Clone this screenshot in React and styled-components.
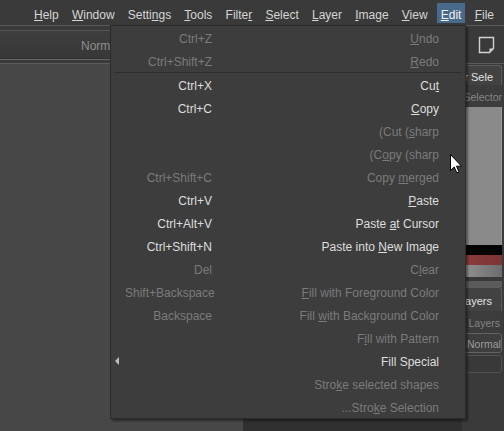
import React from "react";
import styled, { createGlobalStyle } from "styled-components";

const GlobalStyle = createGlobalStyle`
  html, body { margin: 0; padding: 0; background: #3a3a3a; }
  body { font-family: "Liberation Sans", Arial, sans-serif; font-size: 12px; }
`;

const menus = ["&Help", "&Window", "Setti&ngs", "&Tools", "Filte&r", "&Select", "&Layer", "&Image", "&View", "&Edit", "&File"];

const editItems = [
  { s: "Ctrl+Z", l: "&Undo", d: true },
  { s: "Ctrl+Shift+Z", l: "&Redo", d: true },
  "sep",
  { s: "Ctrl+X", l: "Cu&t" },
  { s: "Ctrl+C", l: "&Copy" },
  { l: "(Cut (&sharp", d: true },
  { l: "(C&opy (sharp", d: true },
  { s: "Ctrl+Shift+C", l: "Copy &merged", d: true },
  { s: "Ctrl+V", l: "&Paste" },
  { s: "Ctrl+Alt+V", l: "Paste &at Cursor" },
  { s: "Ctrl+Shift+N", l: "Paste into &New Image" },
  { s: "Del", l: "C&lear", d: true },
  { s: "Shift+Backspace", l: "&Fill with Foreground Color", d: true },
  { s: "Backspace", l: "Fill &with Background Color", d: true },
  { l: "F&ill with Pattern", d: true },
  { l: "Fill Special", sub: true },
  { l: "Stro&ke selected shapes", d: true },
  { l: "...Stro&ke Selection", d: true },
];

// "&x" marks the mnemonic letter
const mnemonic = (text) => {
  const i = text.indexOf("&");
  if (i < 0) return text;
  return (
    <>
      {text.slice(0, i)}
      <Mn>{text[i + 1]}</Mn>
      {text.slice(i + 2)}
    </>
  );
};

const App = () => {
  return (
    <>
      <GlobalStyle />
      <Window>
        <MenuBar>
          {menus.map((m) => (
            <MenuTitle key={m} $active={m === "&Edit"}>{mnemonic(m)}</MenuTitle>
          ))}
        </MenuBar>

        <ToolBar>
          <ToolOptions>
            <BlendLabel>Normal</BlendLabel>
          </ToolOptions>
          <ToolIcons>
            <svg width="17" height="18" viewBox="0 0 17 18">
              <path d="M1.5 1.5 H15.5 V12.5 L11.5 16.5 H1.5 Z" fill="none" stroke="#d2d2d2" strokeWidth="1.4" />
              <path d="M15.5 12.5 H11.5 V16.5 Z" fill="#d2d2d2" />
            </svg>
          </ToolIcons>
        </ToolBar>

        <Workspace>
          <LeftDock />
          <Canvas />
          <RightDock>
            <DockTab $top>Color Sele</DockTab>
            <DockTitle>Selector</DockTitle>
            <ColorField />
            <Band $h={10} $bg="#050505" />
            <Band $h={10} $bg="linear-gradient(90deg, #8d3d3d, #7c3434)" />
            <Band $h={12} $bg="linear-gradient(90deg, #939393, #6c6c6c)" />
            <Band $h={4} $bg="#393939" />
            <Band $h={6} $bg="#5b5b5b" />
            <DockTab>Layers</DockTab>
            <DockTitle $small>Layers</DockTitle>
            <Combo>Normal</Combo>
            <Slot />
          </RightDock>
        </Workspace>

        <DropMenu>
          {editItems.map((it, i) =>
            it === "sep" ? (
              <Separator key={i} />
            ) : (
              <Row key={i} $disabled={it.d}>
                <ArrowCell>{it.sub && <SubArrow />}</ArrowCell>
                <Shortcut>{it.s}</Shortcut>
                <Label>{mnemonic(it.l)}</Label>
              </Row>
            )
          )}
        </DropMenu>

        <Pointer width="13" height="21" viewBox="0 0 13 21">
          <path d="M0.5 0.5 L0.5 16.5 L4.2 13 L6.8 18.8 L9 17.8 L6.5 12.2 L11.5 12.2 Z" fill="#fff" stroke="#000" strokeWidth="1" strokeLinejoin="round" />
        </Pointer>
      </Window>
    </>
  );
};

const Window = styled.div`
  position: relative;
  width: 504px;
  height: 431px;
  overflow: hidden;
  display: flex;
  flex-direction: column;
  background: #3a3a3a;
`;

const MenuBar = styled.div`
  display: flex;
  justify-content: flex-end;
  align-items: flex-start;
  gap: 5.2px;
  height: 25px;
  padding: 3px 6px 0 0;
  box-sizing: border-box;
  background: #3a3a3a;
`;

const MenuTitle = styled.div`
  height: 20px;
  line-height: 24px;
  padding: 0 4px;
  color: ${(p) => (p.$active ? "#f2f2f2" : "#d6d6d6")};
  background: ${(p) => (p.$active ? "#4a6a8b" : "transparent")};
  white-space: nowrap;
`;

const Mn = styled.span`
  text-decoration: underline;
  text-underline-offset: 1px;
`;

const ToolBar = styled.div`
  display: flex;
  height: 39px;
  box-sizing: border-box;
  border-top: 1px solid #5a5a5a;
  border-bottom: 1px solid #5c5c5c;
  background: #3a3a3a;
`;

const ToolOptions = styled.div`
  flex: 1;
  margin-top: 4px;
  height: 29px;
  box-sizing: border-box;
  border-top: 1px solid #545454;
  border-bottom: 1px solid #2e2e2e;
  box-shadow: 0 1px 0 #686868;
  background: linear-gradient(#3e3e3e, #383838);
  display: flex;
  align-items: center;
  padding: 2px 0 0 81px;
`;

const BlendLabel = styled.span`
  color: #8e8e8e;
  font-size: 12px;
`;

const ToolIcons = styled.div`
  width: 38px;
  padding: 10px 0 0 12px;
  box-sizing: border-box;
`;

const Workspace = styled.div`
  flex: 1;
  display: flex;
  min-height: 0;
`;

const LeftDock = styled.div`
  width: 243px;
  background: #474747;
`;

const Canvas = styled.div`
  flex: 1;
  background: #303030;
`;

const RightDock = styled.div`
  width: 42px;
  display: flex;
  flex-direction: column;
  padding: 1px 2px 0 0;
  box-sizing: border-box;
  background: #3a3a3a;
`;

const DockTab = styled.div`
  height: ${(p) => (p.$top ? 20 : 24)}px;
  box-sizing: border-box;
  border: 1px solid #5d5d5d;
  border-bottom: none;
  border-radius: 3px 3px 0 0;
  background: #424242;
  color: #e2e2e2;
  font-size: 11px;
  display: flex;
  align-items: center;
  justify-content: flex-end;
  padding: 2px ${(p) => (p.$top ? 8 : 9)}px 0 0;
  overflow: hidden;
  white-space: nowrap;
`;

const DockTitle = styled.div`
  height: ${(p) => (p.$small ? 21 : 22)}px;
  display: flex;
  align-items: center;
  justify-content: flex-end;
  padding: 2px ${(p) => (p.$small ? 2 : 0)}px 0 0;
  box-sizing: border-box;
  color: #858585;
  font-size: 10.5px;
  white-space: nowrap;
  overflow: hidden;
  background: #3c3c3c;
`;

const ColorField = styled.div`
  height: 138px;
  background: #8a8a8a;
  border-right: 1px solid #9c9c9c;
`;

const Band = styled.div`
  height: ${(p) => p.$h}px;
  background: ${(p) => p.$bg};
`;

const Combo = styled.div`
  margin-top: 1px;
  height: 20px;
  box-sizing: border-box;
  border: 1px solid #636363;
  border-radius: 3px;
  background: #3e3e3e;
  color: #9d9d9d;
  font-size: 10.5px;
  display: flex;
  align-items: center;
  padding: 1px 0 0 4px;
  white-space: nowrap;
  overflow: hidden;
`;

const Slot = styled.div`
  margin-top: 2px;
  height: 18px;
  box-sizing: border-box;
  border: 1px solid #525252;
  border-radius: 3px;
  background: #393939;
`;

const DropMenu = styled.div`
  position: absolute;
  left: 110px;
  top: 25px;
  width: 356px;
  box-sizing: border-box;
  background: #3d3d3d;
  border: 1px solid #2b2b2b;
  box-shadow: 2px 2px 2px rgba(0, 0, 0, 0.4);
`;

const Row = styled.div`
  display: grid;
  grid-template-columns: 14px 87px 1fr;
  align-items: center;
  height: 23px;
  box-sizing: border-box;
  padding: 2px 26px 0 0;
  color: ${(p) => (p.$disabled ? "#7b7b7b" : "#dedede")};
  white-space: nowrap;
`;

const ArrowCell = styled.div`
  display: flex;
  align-items: center;
  padding-left: 4px;
`;

const SubArrow = styled.span`
  width: 0;
  height: 0;
  border-top: 4px solid transparent;
  border-bottom: 4px solid transparent;
  border-right: 4px solid #bdbdbd;
  margin-top: -2px;
`;

const Shortcut = styled.span`
  text-align: right;
`;

const Label = styled.span`
  text-align: right;
`;

const Separator = styled.div`
  height: 1px;
  margin: 0 4px 0 4px;
  background: #2c2c2c;
`;

const Pointer = styled.svg`
  position: absolute;
  left: 450px;
  top: 154px;
`;

export default App;
